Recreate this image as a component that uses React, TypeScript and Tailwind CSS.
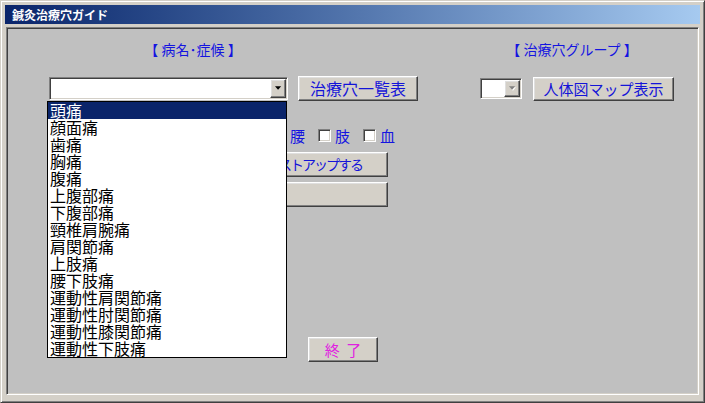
import React from "react";

const font = { fontFamily: '"Noto Sans CJK JP", "Noto Sans", sans-serif' };

const raised =
  "bg-[#d4d0c8] border border-t-white border-l-white border-r-[#404040] border-b-[#404040] shadow-[inset_-1px_-1px_0_#808080,inset_1px_1px_0_#dfdfdf]";
const sunken =
  "border border-t-[#808080] border-l-[#808080] border-r-white border-b-white shadow-[inset_1px_1px_0_#404040,inset_-1px_-1px_0_#d4d0c8]";

const diseases = [
  "頭痛",
  "顔面痛",
  "歯痛",
  "胸痛",
  "腹痛",
  "上腹部痛",
  "下腹部痛",
  "頸椎肩腕痛",
  "肩関節痛",
  "上肢痛",
  "腰下肢痛",
  "運動性肩関節痛",
  "運動性肘関節痛",
  "運動性膝関節痛",
  "運動性下肢痛",
];

const parts = ["頭", "胸", "腹", "腰", "肢", "血"];

function Arrow({ disabled }: { disabled?: boolean }) {
  return (
    <svg width="7" height="5" viewBox="0 0 8 5">
      {disabled && <path d="M1 1h7L4.5 5z" fill="#ffffff" />}
      <path d="M0 0h7L3.5 4z" fill={disabled ? "#808080" : "#000000"} />
    </svg>
  );
}

function Combo({ width, disabled }: { width: string; disabled?: boolean }) {
  return (
    <div className={`${sunken} ${width} flex h-full justify-end bg-white p-[1px]`}>
      <div className={`${raised} flex w-[16px] items-center justify-center`}>
        <Arrow disabled={disabled} />
      </div>
    </div>
  );
}

function Checkbox() {
  return <span className={`${sunken} block h-[13px] w-[13px] bg-white`} />;
}

export default function App() {
  return (
    <div
      className="flex h-[403px] w-[705px] flex-col border border-t-[#d4d0c8] border-l-[#d4d0c8] border-r-[#404040] border-b-[#404040] bg-[#d4d0c8] px-[4px] pt-[4px] pb-[7px] shadow-[inset_1px_1px_0_#ffffff,inset_-1px_-1px_0_#808080]"
      style={font}
    >
      <div className="flex h-[19px] items-center bg-linear-to-r from-[#0a246a] to-[#a6caf0] pl-[7px] text-[12px] leading-[19px] font-bold text-white">
        鍼灸治療穴ガイド
      </div>

      <div className={`${sunken} relative mx-[1px] mt-[3px] flex flex-1 flex-col bg-[#c0c0c0] p-[1px]`}>
        <div className="flex pt-[12px] text-[14px] leading-[16px] text-[#1414e0]">
          <div className="ml-[132px] w-[106px] text-center">【 病名･症候 】</div>
          <div className="ml-[256px] w-[140px] text-center">【 治療穴グループ 】</div>
        </div>

        <div className="mt-[19px] flex h-[25px] items-center text-[15px] text-[#1414d8]">
          <div className="ml-[41px] h-[23px]">
            <Combo width="w-[239px]" />
          </div>
          <button className={`${raised} ml-[10px] h-[25px] w-[120px] text-[16px] leading-[23px]`}>治療穴一覧表</button>
          <div className="ml-[62px] h-[21px]">
            <Combo width="w-[42px]" disabled />
          </div>
          <button className={`${raised} ml-[11px] h-[24px] w-[141px] leading-[22px]`}>人体図マップ表示</button>
        </div>

        <div className="mt-[27px] ml-[130px] flex h-[15px] items-center text-[15px] leading-[15px] text-[#1414e0]">
          {parts.map((p) => (
            <div key={p} className="mr-[13px] flex items-center gap-[4px]">
              <Checkbox />
              <span>{p}</span>
            </div>
          ))}
        </div>

        <button
          className={`${raised} mt-[9px] ml-[219px] flex h-[25px] w-[161px] items-center pl-[38px] text-[14px] leading-[23px] tracking-[-2px] text-[#1414d8]`}
        >
          リストアップする
        </button>
        <button className={`${raised} mt-[5px] ml-[219px] h-[25px] w-[161px]`} />

        <button
          className={`${raised} mt-[130px] ml-[300px] h-[25px] w-[70px] text-[15px] leading-[23px] whitespace-pre text-[#e020e0]`}
        >
          {"終  了"}
        </button>

        <ul className="absolute top-[73px] left-[40px] w-[240px] border border-black bg-white text-[16px] leading-[17px] text-black">
          {diseases.map((d, i) => (
            <li
              key={d}
              className={`h-[17px] pl-[2px] ${i === 0 ? "bg-[#0a246a] text-white" : ""}`}
            >
              {d}
            </li>
          ))}
        </ul>
      </div>
    </div>
  );
}
